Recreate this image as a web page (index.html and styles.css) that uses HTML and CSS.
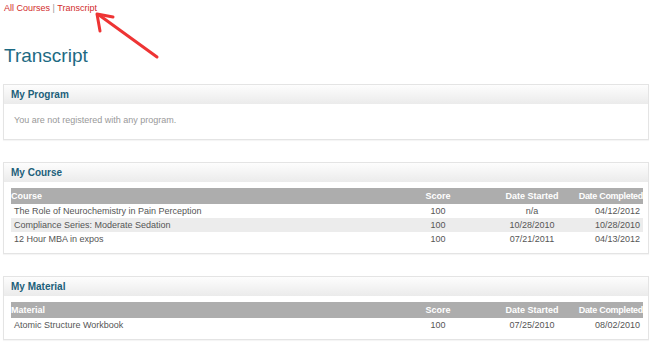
FILE: index.html
```html
<!DOCTYPE html>
<html lang="en">
<head>
    <meta charset="UTF-8">
    <title>Transcript</title>
    <link rel="stylesheet" href="styles.css">
</head>
<body>
    <div class="breadcrumb">
        <a href="#">All Courses</a> <span class="sep">|</span> <a href="#">Transcript</a>
    </div>
    <svg class="pointer" width="170" height="70" viewBox="0 0 170 70">
        <line x1="157" y1="57" x2="99" y2="15" stroke="#ee3434" stroke-width="3" stroke-linecap="round"/>
        <polyline points="113,17 97,14 100,31" fill="none" stroke="#ee3434" stroke-width="3" stroke-linecap="round" stroke-linejoin="round"/>
    </svg>

    <h1 class="page-title">Transcript</h1>

    <div class="panel">
        <div class="panel-head">My Program</div>
        <div class="panel-body">You are not registered with any program.</div>
    </div>

    <div class="panel">
        <div class="panel-head">My Course</div>
        <table class="grid">
            <colgroup>
                <col class="c-name"><col class="c-score"><col class="c-start"><col class="c-done">
            </colgroup>
            <thead>
                <tr><th class="name">Course</th><th>Score</th><th>Date Started</th><th class="done">Date Completed</th></tr>
            </thead>
            <tbody>
                <tr><td class="name">The Role of Neurochemistry in Pain Perception</td><td>100</td><td>n/a</td><td class="done">04/12/2012</td></tr>
                <tr class="alt"><td class="name">Compliance Series: Moderate Sedation</td><td>100</td><td>10/28/2010</td><td class="done">10/28/2010</td></tr>
                <tr><td class="name">12 Hour MBA in expos</td><td>100</td><td>07/21/2011</td><td class="done">04/13/2012</td></tr>
            </tbody>
        </table>
    </div>

    <div class="panel">
        <div class="panel-head">My Material</div>
        <table class="grid">
            <colgroup>
                <col class="c-name"><col class="c-score"><col class="c-start"><col class="c-done">
            </colgroup>
            <thead>
                <tr><th class="name">Material</th><th>Score</th><th>Date Started</th><th class="done">Date Completed</th></tr>
            </thead>
            <tbody>
                <tr><td class="name">Atomic Structure Workbook</td><td>100</td><td>07/25/2010</td><td class="done">08/02/2010</td></tr>
            </tbody>
        </table>
    </div>
</body>
</html>
```

FILE: styles.css
```css
body {
    font-family: "Liberation Sans", Arial, sans-serif;
    margin: 0;
    padding: 0 1px 0 3px;
    background: #fff;
    color: #555;
    position: relative;
}
.breadcrumb {
    padding: 2px 0 0 1px;
    font-size: 9px;
    line-height: 12px;
}
.breadcrumb a {
    color: #d22b2b;
    text-decoration: none;
}
.breadcrumb .sep {
    color: #9a9a9a;
}
.pointer {
    position: absolute;
    top: 0;
    left: 0;
}
.page-title {
    margin: 31px 0 0 1px;
    font-size: 19px;
    line-height: 22px;
    font-weight: normal;
    color: #1d6a83;
}
.panel {
    margin: 17px 0 22px;
    border: 1px solid #e4e4e4;
    background: #fff;
    box-shadow: 0 1px 1px rgba(0, 0, 0, 0.04);
}
.panel + .panel {
    margin-top: 0;
}
.panel-head {
    height: 19px;
    line-height: 19px;
    padding-left: 7px;
    font-size: 10px;
    font-weight: bold;
    color: #1c5f7a;
    background: linear-gradient(#fdfdfd, #ebebeb);
}
.panel-body {
    padding: 10px 10px 13px;
    font-size: 9px;
    line-height: 12px;
    color: #999;
}
.grid {
    width: 632px;
    margin: 6px 0 7px 7px;
    border-collapse: collapse;
    table-layout: fixed;
    font-size: 9px;
}
.c-name { width: 379px; }
.c-score { width: 96px; }
.c-start { width: 92px; }
.c-done { width: 65px; }
.grid th {
    height: 16px;
    padding: 0;
    background: #adadad;
    color: #fff;
    font-weight: bold;
    text-align: center;
    white-space: nowrap;
}
.grid th.done {
    text-align: right;
    letter-spacing: -0.3px;
}
.grid td {
    height: 14px;
    padding: 0;
    line-height: 14px;
    text-align: center;
    color: #555;
    white-space: nowrap;
}
.grid .name {
    text-align: left;
}
.grid td.name {
    padding-left: 3px;
}
.grid td.done {
    padding-left: 14px;
}
.grid tr.alt td {
    background: #ececec;
}
```
